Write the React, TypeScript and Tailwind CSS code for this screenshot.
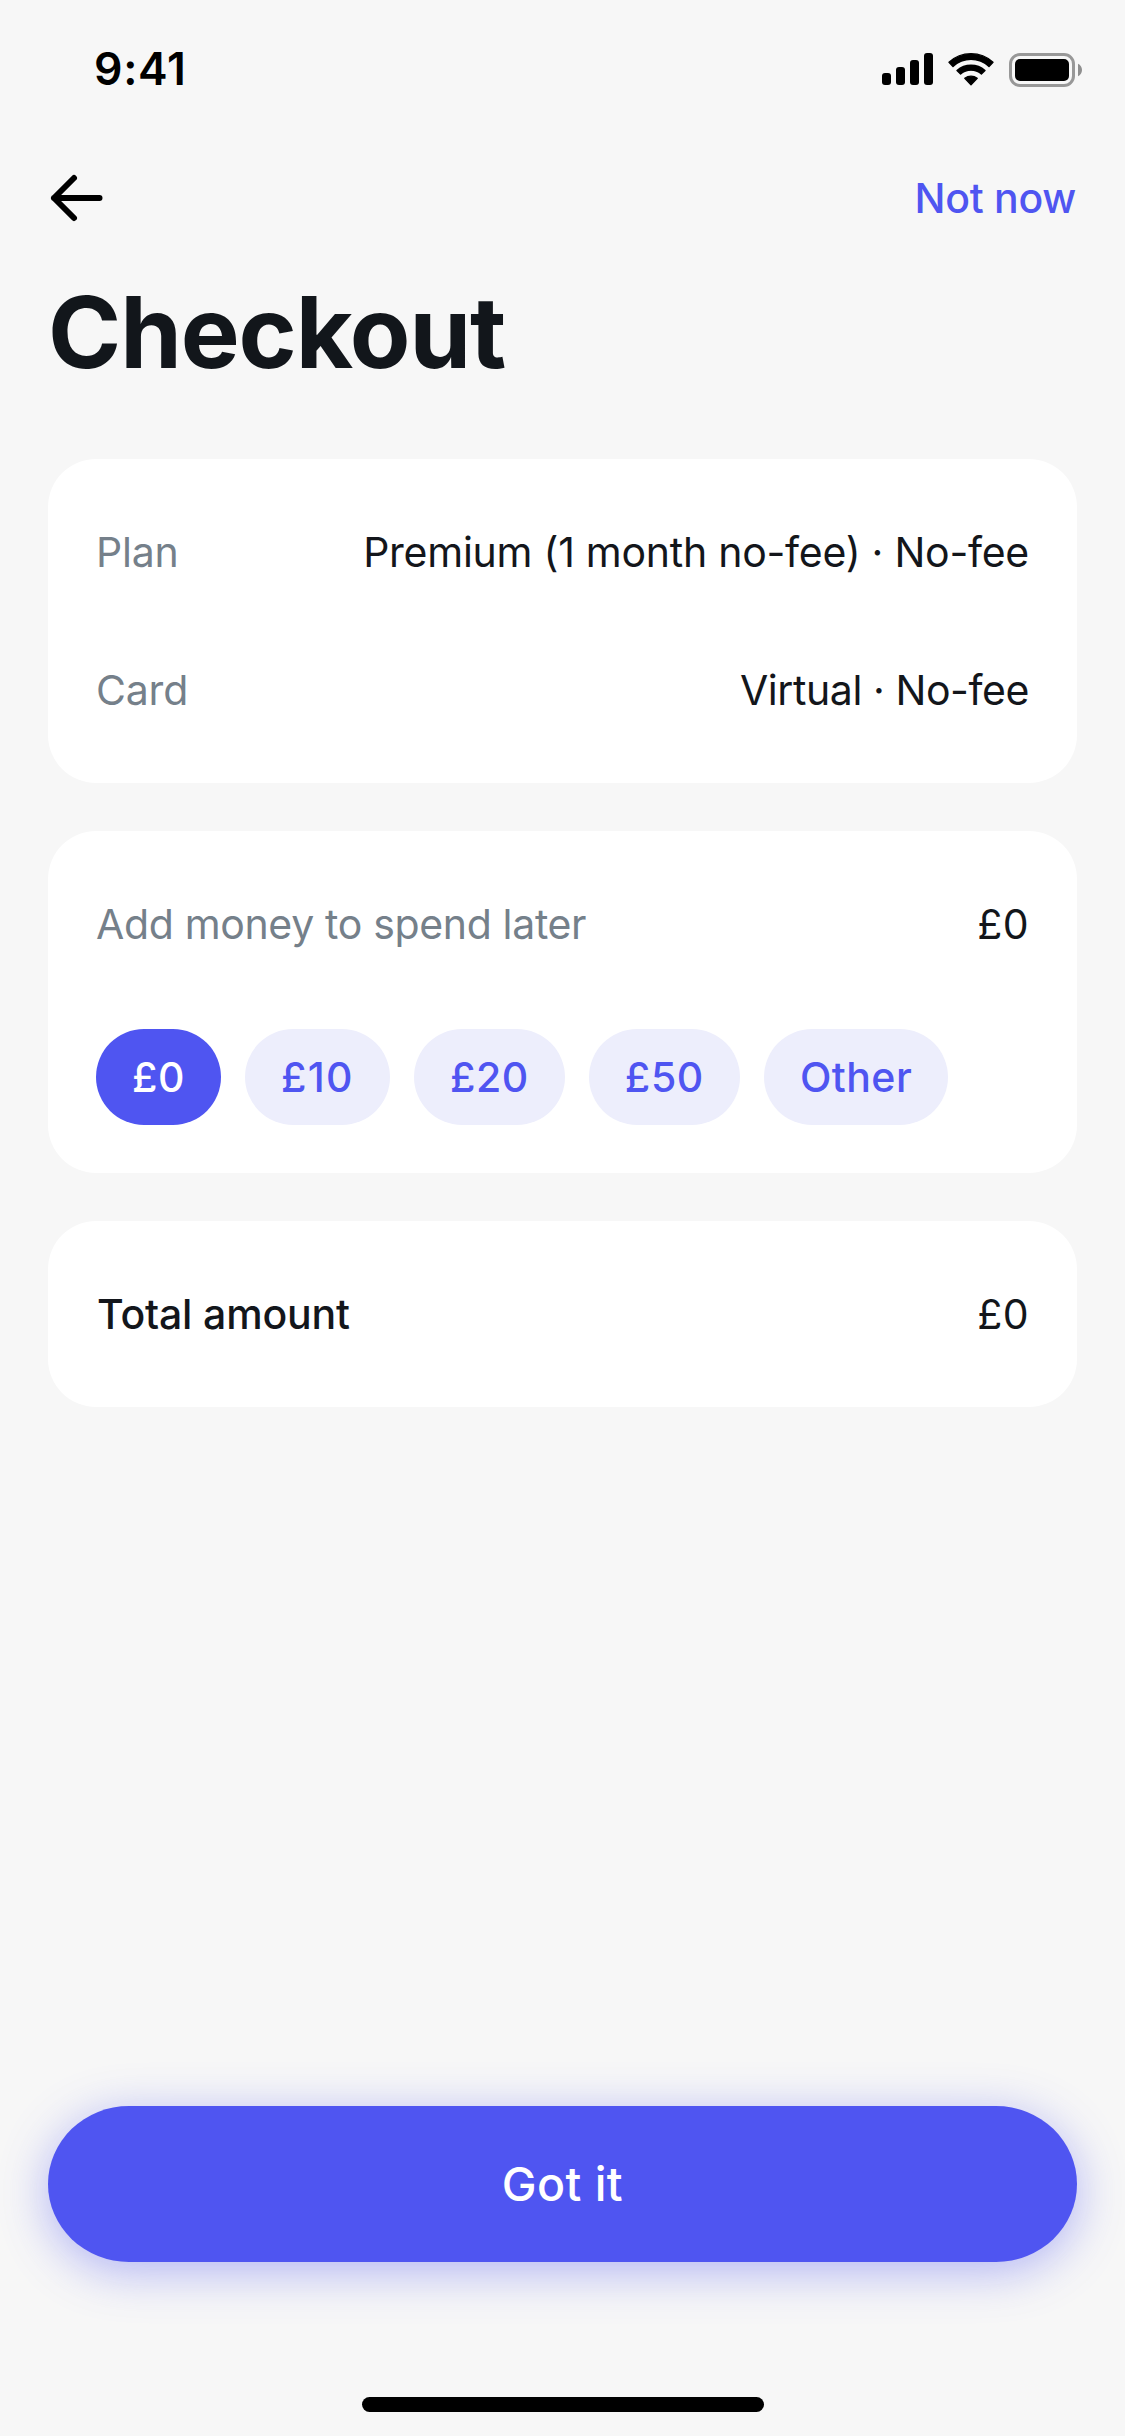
import type { ReactNode } from "react";
import clsx from "clsx";

const details = [
  { label: "Plan", value: "Premium (1 month no-fee) · No-fee", tracking: "tracking-[-0.26px]" },
  { label: "Card", value: "Virtual · No-fee", tracking: "tracking-[-0.43px]" },
];

const amounts = [
  { label: "£0", tracking: "tracking-[0.5px]", active: true },
  { label: "£10", tracking: "tracking-[1.36px]" },
  { label: "£20", tracking: "tracking-[0.6px]" },
  { label: "£50", tracking: "tracking-[0.6px]" },
  { label: "Other", tracking: "tracking-[0.46px]" },
];

function SignalIcon() {
  return (
    <svg width="51" height="32" viewBox="0 0 51 32" fill="black">
      <rect x="0" y="20" width="9" height="12" rx="3" />
      <rect x="14" y="14" width="9" height="18" rx="3" />
      <rect x="28" y="7" width="9" height="25" rx="3" />
      <rect x="42" y="0" width="9" height="32" rx="3" />
    </svg>
  );
}

function WifiIcon() {
  return (
    <svg width="46" height="36" viewBox="-23 -34.5 46 36" fill="black" stroke="black" strokeWidth="1.4" strokeLinejoin="round">
      <path d="M-22 -23.2A32.3 32.3 0 0 1 22 -23.2L18 -19A26.4 26.4 0 0 0 -18 -19Z" />
      <path d="M-14 -15A21.2 21.2 0 0 1 14 -15L10.4 -11.5A16 16 0 0 0 -10.4 -11.5Z" />
      <path d="M-6.2 -7.2A10.3 10.3 0 0 1 6.2 -7.2L0 -0.8Z" />
    </svg>
  );
}

function BatteryIcon() {
  return (
    <svg width="74" height="34" viewBox="0 0 74 34">
      <rect x="1.5" y="1.5" width="63" height="31" rx="9.5" fill="none" stroke="#989898" strokeWidth="3" />
      <rect x="6" y="6" width="54" height="22" rx="5" fill="black" />
      <path d="M69 10.8C71.4 11.8 73 14.2 73 17S71.4 22.2 69 23.2Z" fill="#8f8f8f" />
    </svg>
  );
}

function Card({ children }: { children: ReactNode }) {
  return <section className="rounded-[48px] bg-white px-12 py-6">{children}</section>;
}

function Row({ children }: { children: ReactNode }) {
  return <div className="flex h-[138px] items-center justify-between pt-0.5 text-[41px] text-[#13161b]">{children}</div>;
}

export default function App() {
  return (
    <main className="flex h-[2436px] w-[1125px] flex-col bg-[#f7f7f7] font-['Inter',sans-serif]">
      {/* Status bar */}
      <div className="flex h-[138px] items-center justify-between pr-[42px] pl-[94px]">
        <span className="pt-px text-[44.5px] font-semibold tracking-[0.7px] text-black">9:41</span>
        <div className="flex items-center">
          <SignalIcon />
          <div className="ml-[15px]">
            <WifiIcon />
          </div>
          <div className="mt-[2px] ml-[15px]">
            <BatteryIcon />
          </div>
        </div>
      </div>

      {/* Navigation */}
      <header className="flex h-[120px] items-center justify-between px-12">
        <button aria-label="Back">
          <svg width="58" height="52" viewBox="0 0 58 52" fill="none" stroke="black" strokeWidth="6" strokeLinecap="round" strokeLinejoin="round">
            <path d="M51.5 26H6M26 6L6 26L26 46" />
          </svg>
        </button>
        <button className="pt-0.5 pr-px text-[41px] font-medium tracking-[-0.28px] text-[#4f55f1]">Not now</button>
      </header>

      <h1 className="px-12 pt-px text-[99px] leading-[146px] font-bold tracking-[-1.1px] text-[#12161b]">Checkout</h1>

      <div className="mt-[54px] flex flex-col gap-12 px-12">
        <Card>
          {details.map((item) => (
            <Row key={item.label}>
              <span className="tracking-[-0.2px] text-[#75808a]">{item.label}</span>
              <span className={item.tracking}>{item.value}</span>
            </Row>
          ))}
        </Card>

        <Card>
          <Row>
            <span className="tracking-[-0.34px] text-[#75808a]">Add money to spend later</span>
            <span className="tracking-[0.46px]">£0</span>
          </Row>
          <div className="mt-9 mb-6 flex gap-6">
            {amounts.map((amount) => (
              <button
                key={amount.label}
                className={clsx(
                  "h-24 rounded-full px-9 pt-0.5 text-[41px] font-medium",
                  amount.tracking,
                  amount.active ? "bg-[#4f55f1] text-white" : "bg-[#edeefc] text-[#4f55f1]",
                )}
              >
                {amount.label}
              </button>
            ))}
          </div>
        </Card>

        <Card>
          <Row>
            <span className="pl-px font-medium tracking-[-0.16px]">Total amount</span>
            <span className="tracking-[0.46px]">£0</span>
          </Row>
        </Card>
      </div>

      {/* Bottom action */}
      <div className="mt-auto px-12">
        <button className="h-[156px] w-full rounded-[81px/78px] bg-[#4f55f1] pt-0.5 text-[46.5px] font-medium tracking-[0.44px] text-white shadow-[0_9px_48px_rgba(79,85,241,0.42)]">
          Got it
        </button>
      </div>
      <div className="mx-auto mt-[135px] mb-6 h-[15px] w-[402px] rounded-full bg-black" />
    </main>
  );
}
